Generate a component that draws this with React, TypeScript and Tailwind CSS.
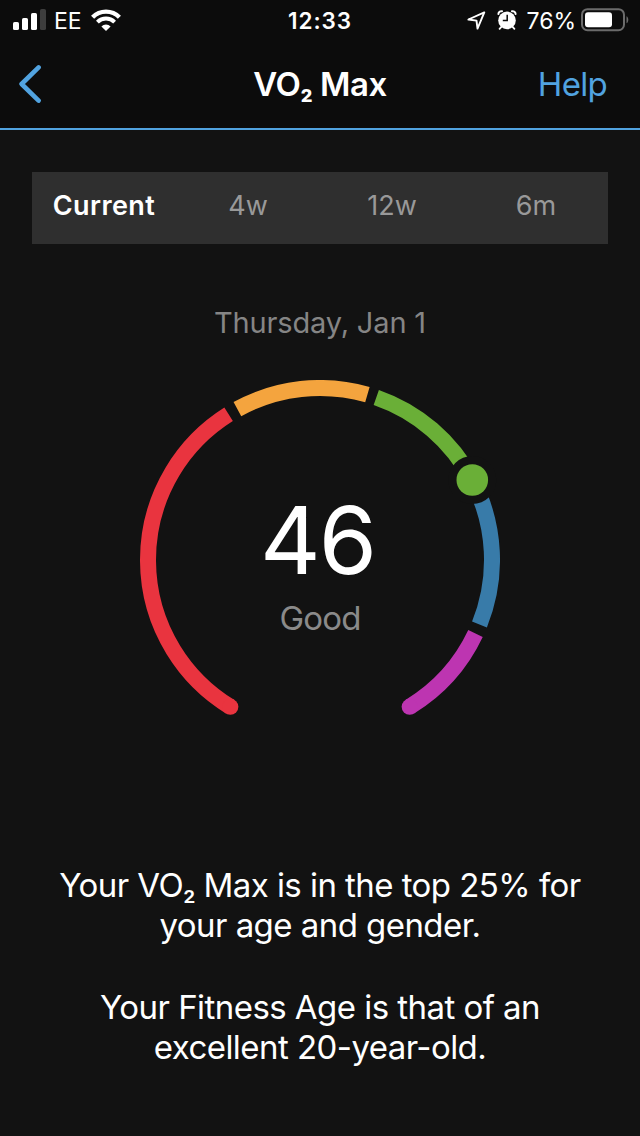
import { useState } from 'react'

interface Segment {
  id: string
  from: number
  to: number
  color: string
}

const ranges = ['Current', '4w', '12w', '6m']

// Angles are in degrees, clockwise from 12 o'clock
const segments: Segment[] = [
  { id: 'poor', from: -148.6, to: -32.1, color: '#e9343f' },
  { id: 'fair', from: -28.7, to: 16, color: '#f4a43e' },
  { id: 'good', from: 19.1, to: 62.3, color: '#6aaf37' },
  { id: 'excellent', from: 62.3, to: 112, color: '#387ba9' },
  { id: 'superior', from: 115.3, to: 148.6, color: '#bd35b1' }
]

const CENTER = 180
const RADIUS = 172
const KNOB_ANGLE = 62.3

const pointAt = (angle: number) => {
  const rad = (angle * Math.PI) / 180
  return { x: CENTER + RADIUS * Math.sin(rad), y: CENTER - RADIUS * Math.cos(rad) }
}

const arcPath = (from: number, to: number) => {
  const a = pointAt(from)
  const b = pointAt(to)
  return `M${a.x} ${a.y}A${RADIUS} ${RADIUS} 0 ${to - from > 180 ? 1 : 0} 1 ${b.x} ${b.y}`
}

function StatusBar() {
  return (
    <div className="grid h-10 grid-cols-3 items-center px-[11px] text-white">
      <div className="flex items-center pl-[2px]">
        <svg width="33" height="22" viewBox="0 0 33 22" fill="#fff">
          <rect x="0" y="13" width="6" height="8" rx="1.6" />
          <rect x="9" y="9" width="6" height="12" rx="1.6" />
          <rect x="18" y="4" width="6" height="17" rx="1.6" />
          <rect x="27" y="0" width="6" height="21" rx="1.6" fill="#3d3d3d" />
        </svg>
        <span className="ml-2 pt-[2px] text-[23px] leading-[38px]">EE</span>
        <svg className="ml-[9px]" width="30" height="22" viewBox="0 0 30 22" fill="none" stroke="#fff">
          <path d="M1.6 8.2a19 19 0 0 1 26.8 0" strokeWidth="4.4" />
          <path d="M6.4 13.1a12.3 12.3 0 0 1 17.2 0" strokeWidth="4" />
          <path d="M15 22l-4.6-4.6a6.6 6.6 0 0 1 9.2 0z" fill="#fff" stroke="none" />
        </svg>
      </div>
      <span className="pt-[2px] text-center text-[22.5px] font-semibold leading-[38px] tracking-[0.9px]">12:33</span>
      <div className="flex items-center justify-end">
        <svg width="19" height="19" viewBox="0 0 19 19" fill="none" stroke="#fff" strokeWidth="1.9" strokeLinejoin="round">
          <path d="M17.3 1.4L1.4 8.5l8.1 1.1 1 8z" />
        </svg>
        <svg className="ml-[11px]" width="20" height="20" viewBox="0 0 20 20">
          <circle cx="10" cy="10.4" r="8.8" fill="#fff" />
          <path d="M1.4 4a3 3 0 0 1 3.6-2.8M18.6 4a3 3 0 0 0-3.6-2.8" stroke="#fff" strokeWidth="2" fill="none" strokeLinecap="round" />
          <path d="M4.6 16.6l-2 2.2M15.4 16.6l2 2.2" stroke="#fff" strokeWidth="1.8" strokeLinecap="round" />
          <path d="M10.2 4.8v5.8H5.8" stroke="#0c0c0c" strokeWidth="1.5" fill="none" />
        </svg>
        <span className="ml-[9px] pt-[2px] text-[23px] leading-[38px]">76%</span>
        <svg className="ml-[5px] shrink-0" width="48" height="24" viewBox="0 0 48 24">
          <rect x="1" y="1.2" width="42" height="21" rx="5.5" fill="none" stroke="#6b6b6b" strokeWidth="2" />
          <rect x="4" y="4.2" width="27" height="15" rx="3" fill="#fff" />
          <path d="M45.5 8.2c2.4 1 2.4 6 0 7z" fill="#6b6b6b" />
        </svg>
      </div>
    </div>
  )
}

function NavBar() {
  return (
    <div className="grid h-[90px] grid-cols-3 items-center border-b-2 border-[#51a3e0] px-[19px]">
      <button aria-label="Back" className="w-6">
        <svg width="24" height="40" viewBox="0 0 24 40" fill="none" stroke="#51a3e0" strokeWidth="4.6" strokeLinecap="round" strokeLinejoin="round">
          <path d="M19.6 3.4L2.6 20l17 16.6" />
        </svg>
      </button>
      <h1 className="whitespace-nowrap pt-[2px] text-center text-[33px] font-semibold tracking-[-0.5px] text-white">
        VO<span className="font-['Roboto'] leading-none">₂</span> Max
      </h1>
      <button className="pr-[14px] pt-[2px] text-right text-[33px] tracking-[-0.7px] text-[#51a3e0]">Help</button>
    </div>
  )
}

function Gauge({ value, label }: { value: number; label: string }) {
  const knob = pointAt(KNOB_ANGLE)
  const first = segments[0]
  const last = segments[segments.length - 1]
  const caps = [
    { id: 'start', color: first.color, ...pointAt(first.from) },
    { id: 'end', color: last.color, ...pointAt(last.to) }
  ]

  return (
    <div className="grid size-[360px] place-items-center">
      <svg className="col-start-1 row-start-1" width="360" height="360" viewBox="0 0 360 360">
        {segments.map(s => (
          <path key={s.id} d={arcPath(s.from, s.to)} fill="none" stroke={s.color} strokeWidth="16" />
        ))}
        {caps.map(c => (
          <circle key={c.id} cx={c.x} cy={c.y} r="8" fill={c.color} />
        ))}
        <circle cx={knob.x} cy={knob.y} r="24" fill="#121212" />
        <circle cx={knob.x} cy={knob.y} r="15.8" fill="#6aaf37" />
      </svg>
      <div className="col-start-1 row-start-1 flex flex-col items-center pt-[10px]">
        <span className="pr-[5px] text-[94px] leading-[96px] tracking-[-2px] text-white">{value}</span>
        <span className="mt-[10px] text-[33px] leading-10 tracking-[-0.8px] text-[#8a8a8a]">{label}</span>
      </div>
    </div>
  )
}

export default function App() {
  const [range, setRange] = useState('Current')

  return (
    <div className="flex h-[1136px] w-[640px] flex-col bg-[#121212] font-['Inter',sans-serif]">
      {/* Header */}
      <header className="bg-[#0c0c0c]">
        <StatusBar />
        <NavBar />
      </header>

      {/* Range tabs */}
      <div className="mx-8 mt-[42px] grid h-[72px] grid-cols-4 bg-[#2f2f2f]">
        {ranges.map(r => (
          <button
            key={r}
            onClick={() => setRange(r)}
            className={`pb-[4px] text-[27px] ${r === range ? 'font-semibold tracking-[0.4px] text-white' : 'text-[#999999]'}`}
          >
            {r}
          </button>
        ))}
      </div>

      <main className="flex flex-col items-center">
        <p className="mt-[59px] text-[29px] leading-10 tracking-[-0.15px] text-[#858585]">Thursday, Jan 1</p>
        <div className="mt-[37px]">
          <Gauge value={46} label="Good" />
        </div>

        {/* Summary */}
        <div className="mt-[125px] space-y-[42px] whitespace-nowrap text-center text-[33px] leading-10 tracking-[-0.55px] text-white">
          <p>
            Your VO<span className="font-['Roboto'] leading-none">₂</span> Max is in the top 25% for
            <br />
            your age and gender.
          </p>
          <p>
            Your Fitness Age is that of an
            <br />
            excellent 20-year-old.
          </p>
        </div>
      </main>
    </div>
  )
}
